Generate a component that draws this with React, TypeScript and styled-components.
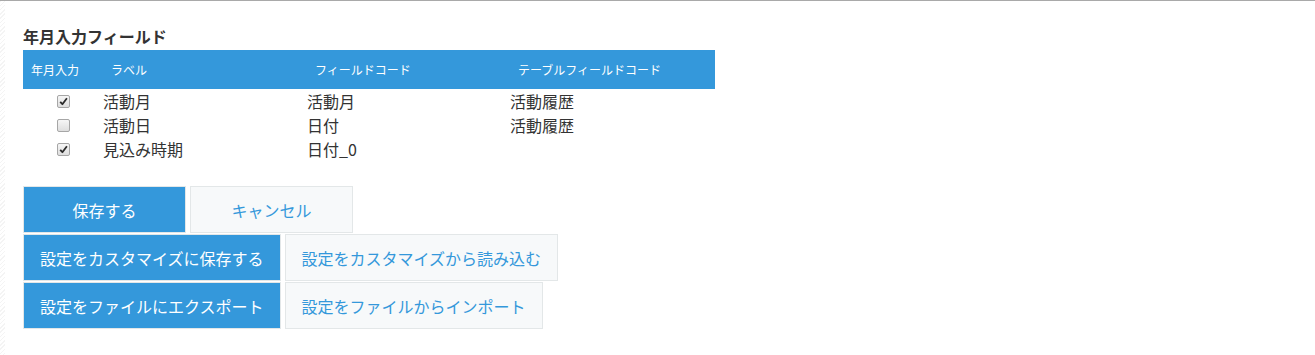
import React from "react";
import styled, { createGlobalStyle } from "styled-components";

const Global = createGlobalStyle`
  html, body { margin: 0; padding: 0; background: #fff; }
  body {
    font-family: "Noto Sans CJK JP", "Noto Sans", sans-serif;
    color: #333;
  }
`;

const Page = styled.div`
  display: flex;
  min-height: 355px;
  border-top: 1px solid #a9a9a9;
  box-sizing: border-box;
`;

const Hatch = styled.div`
  width: 5px;
  flex: none;
  background: repeating-linear-gradient(
    135deg,
    #f4f4f4 0px,
    #f4f4f4 1px,
    #ffffff 1px,
    #ffffff 3px
  );
`;

const Content = styled.div`
  padding: 23px 0 0 18px;
  display: flex;
  flex-direction: column;
`;

const Title = styled.h3`
  margin: 0 0 2px 0;
  font-size: 16px;
  line-height: 24px;
  font-weight: 700;
  color: #333;
`;

const Table = styled.div`
  width: 692px;
  display: grid;
  grid-template-columns: 80px 204px 203px 205px;
`;

const HeadCell = styled.div`
  background: #3498db;
  color: #fff;
  font-size: 12px;
  height: 39px;
  display: flex;
  align-items: center;
  padding-left: 8px;
  white-space: nowrap;
`;

const Cell = styled.div<{ $center?: boolean }>`
  height: 24px;
  display: flex;
  align-items: center;
  justify-content: ${(p) => (p.$center ? "center" : "flex-start")};
  font-size: 16px;
  line-height: 24px;
  color: #333;
  white-space: nowrap;
`;

const Box = styled.span<{ $checked: boolean }>`
  width: 11px;
  height: 11px;
  border: 1px solid #a6a6a6;
  border-radius: 2px;
  background: linear-gradient(#f6f6f6, #dedede);
  display: flex;
  align-items: center;
  justify-content: center;
`;

const Buttons = styled.div`
  margin-top: 25px;
  display: flex;
  flex-direction: column;
  gap: 1px;
`;

const ButtonRow = styled.div`
  display: flex;
  gap: 4px;
`;

const Button = styled.button<{ $primary?: boolean }>`
  box-sizing: border-box;
  min-width: 163px;
  height: 47px;
  padding: 0 16px;
  border: 1px solid #e3e7e8;
  background: ${(p) => (p.$primary ? "#3498db" : "#f7f9fa")};
  color: ${(p) => (p.$primary ? "#ffffff" : "#3498db")};
  font-family: "Noto Sans CJK JP", "Noto Sans", sans-serif;
  font-size: 16px;
  line-height: 1;
  cursor: pointer;
  white-space: nowrap;
`;

const Check = ({ checked }: { checked: boolean }) => (
  <Box $checked={checked}>
    {checked && (
      <svg width="9" height="9" viewBox="0 0 9 9">
        <path
          d="M1.2 4.8 L3.4 7.2 L7.9 1.2"
          fill="none"
          stroke="#2b2b2b"
          strokeWidth="1.8"
          strokeLinejoin="round"
        />
      </svg>
    )}
  </Box>
);

const rows = [
  { checked: true, label: "活動月", code: "活動月", table: "活動履歴" },
  { checked: false, label: "活動日", code: "日付", table: "活動履歴" },
  { checked: true, label: "見込み時期", code: "日付_0", table: "" },
];

export default function App() {
  return (
    <>
      <Global />
      <Page>
        <Hatch />
        <Content>
          <Title>年月入力フィールド</Title>
          <Table>
            <HeadCell>年月入力</HeadCell>
            <HeadCell>ラベル</HeadCell>
            <HeadCell>フィールドコード</HeadCell>
            <HeadCell>テーブルフィールドコード</HeadCell>
            {rows.map((r, i) => (
              <React.Fragment key={i}>
                <Cell $center>
                  <Check checked={r.checked} />
                </Cell>
                <Cell>{r.label}</Cell>
                <Cell>{r.code}</Cell>
                <Cell>{r.table}</Cell>
              </React.Fragment>
            ))}
          </Table>
          <Buttons>
            <ButtonRow>
              <Button $primary>保存する</Button>
              <Button>キャンセル</Button>
            </ButtonRow>
            <ButtonRow>
              <Button $primary>設定をカスタマイズに保存する</Button>
              <Button>設定をカスタマイズから読み込む</Button>
            </ButtonRow>
            <ButtonRow>
              <Button $primary>設定をファイルにエクスポート</Button>
              <Button>設定をファイルからインポート</Button>
            </ButtonRow>
          </Buttons>
        </Content>
      </Page>
    </>
  );
}
